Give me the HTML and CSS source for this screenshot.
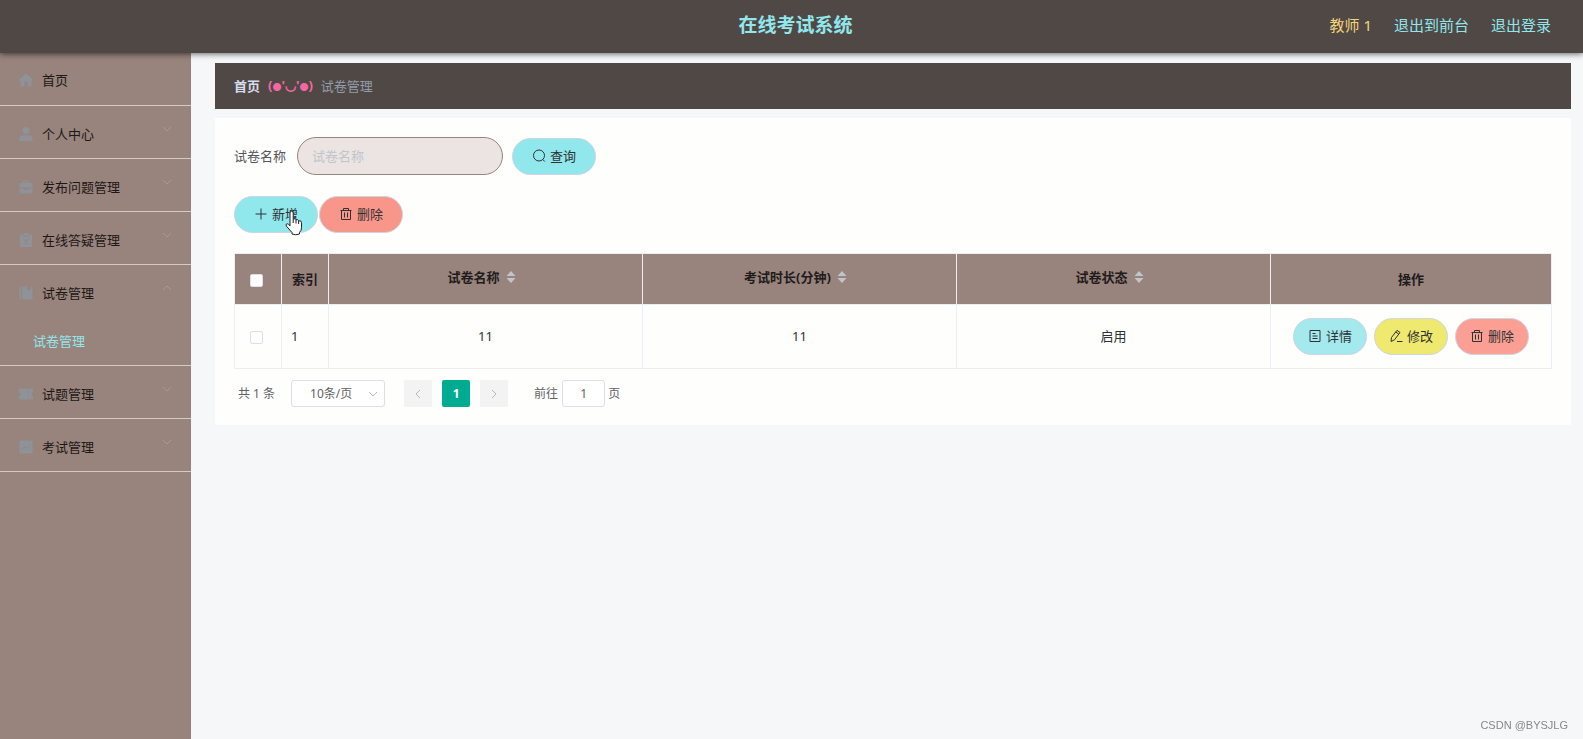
FILE: index.html
```html
<!DOCTYPE html>
<html lang="zh-CN">
<head>
<meta charset="utf-8">
<title>在线考试系统</title>
<link rel="stylesheet" href="styles.css">
</head>
<body>
<svg class="defs" aria-hidden="true">
  <symbol id="down" viewBox="0 0 10 10"><path d="M1 3l4 4 4-4" fill="none" stroke="currentColor"/></symbol>
  <symbol id="up" viewBox="0 0 10 10"><path d="M1 7l4-4 4 4" fill="none" stroke="currentColor"/></symbol>
  <symbol id="trash" viewBox="0 0 14 14"><path d="M1.500 3.500h11M2.500 3.500v9h9v-9M4.500 3.500v-2h5v2M5.500 5.500v5M8.500 5.500v5" fill="none" stroke="currentColor"/></symbol>
  <symbol id="sort" viewBox="0 0 10 12"><path d="M5 0l4.500 5h-9zM5 12L.5 7h9z" fill="currentColor"/></symbol>
</svg>
<header class="topbar">
  <h1 class="topbar-title">在线考试系统</h1>
  <nav class="topbar-links">
    <span class="user-name">教师 1</span>
    <a href="#">退出到前台</a>
    <a href="#">退出登录</a>
  </nav>
</header>
<div class="layout">
  <nav class="sidebar">
    <ul class="menu">
      <li class="menu-group"><a class="menu-item menu-home" href="#">
        <svg class="menu-icon" viewBox="0 0 14 14"><path d="M7 .5L.3 6.500V8h1.200v5.500h3.800V9.500q0-1.500 1.700-1.500t1.700 1.500v4h3.800V8h1.200V6.500z"/></svg>
        <span>首页</span></a></li>
      <li class="menu-group"><a class="menu-item" href="#">
        <svg class="menu-icon" viewBox="0 0 14 14"><circle cx="7" cy="3.500" r="3.500"/><path d="M.5 14v-2.500q0-3 3-3h7q3 0 3 3V14z"/></svg>
        <span>个人中心</span><svg class="menu-arrow"><use href="#down"/></svg></a></li>
      <li class="menu-group"><a class="menu-item" href="#">
        <svg class="menu-icon" viewBox="0 0 14 14"><path d="M4 3V.5h6V3h3.500v4.500H.5V3zm1.200 0h3.600V1.700H5.200zM.5 8.500h4.700V10h3.600V8.500h4.700v5H.5z"/></svg>
        <span>发布问题管理</span><svg class="menu-arrow"><use href="#down"/></svg></a></li>
      <li class="menu-group"><a class="menu-item" href="#">
        <svg class="menu-icon" viewBox="0 0 14 14"><path d="M1 1.500h3.500V0h5v1.500H13V14H1z"/><path class="menu-cut" d="M3.500 3h7M4.500 6l5 5M9.500 6l-5 5"/></svg>
        <span>在线答疑管理</span><svg class="menu-arrow"><use href="#down"/></svg></a></li>
      <li class="menu-group"><a class="menu-item" href="#">
        <svg class="menu-icon" viewBox="0 0 14 14"><path d="M.5.5h1.700v13H.5zM3.200.5h5v4.300l1.700-1.300 1.700 1.300V.5h1.900v13H3.200z"/></svg>
        <span>试卷管理</span><svg class="menu-arrow"><use href="#up"/></svg></a>
        <a class="submenu-item" href="#">试卷管理</a></li>
      <li class="menu-group"><a class="menu-item" href="#">
        <svg class="menu-icon" viewBox="0 0 14 14"><path d="M0 1.500h9v1h1v-1h4v3.200q-3 2.300 0 4.600v3.200h-4v-1H9v1H0V9.300q3-2.300 0-4.600zM9 4v2h1V4zm0 4v2h1V8z"/></svg>
        <span>试题管理</span><svg class="menu-arrow"><use href="#down"/></svg></a></li>
      <li class="menu-group"><a class="menu-item" href="#">
        <svg class="menu-icon" viewBox="0 0 14 14"><path d="M.5.5h13v13H.5z"/><path class="menu-cut" d="M2.500 10l3-3.500 2.500 2 3.500-4"/></svg>
        <span>考试管理</span><svg class="menu-arrow"><use href="#down"/></svg></a></li>
    </ul>
  </nav>
  <main class="content">
    <nav class="breadcrumb">
      <a class="crumb-home" href="#">首页</a>
      <span class="crumb-face">(<span class="crumb-cheek">●</span>'◡'<span class="crumb-cheek">●</span>)</span>
      <span class="crumb-current">试卷管理</span>
    </nav>
    <section class="card">
      <form class="search">
        <label for="paper-name">试卷名称</label>
        <input class="search-input" id="paper-name" type="text" placeholder="试卷名称">
        <button class="btn btn-cyan" type="button"><svg class="icon" viewBox="0 0 14 14"><circle cx="7" cy="6.500" r="5.500" fill="none" stroke="currentColor"/><path d="M10.800 10.500l2 2" stroke="currentColor"/></svg>查询</button>
      </form>
      <div class="actions">
        <button class="btn btn-cyan btn-add" type="button"><svg class="icon" viewBox="0 0 14 14"><path d="M7 1.500v11M1.500 7h11" stroke="currentColor"/></svg>新增
          <svg class="pointer" viewBox="0 0 18 26"><path d="M5 14V3q0-1.800 1.600-1.800T8.200 3v6q2.200-1 2.800.8 2-.9 2.600 1 2.900-.8 2.900 2v5q0 3-2 4.500V24q-4 1.500-7.500 0v-1.500L1.300 16q-.9-2.200 1-2.200 1.300 0 2.700 2.200zM8.200 9v4M11 10v3.500M13.600 11v3" fill="#fff" stroke="#222"/></svg>
        </button>
        <button class="btn btn-red" type="button"><svg class="icon"><use href="#trash"/></svg>删除</button>
      </div>
      <table class="papers">
        <colgroup><col class="col-small"><col class="col-small"><col><col><col><col class="col-ops"></colgroup>
        <thead>
          <tr>
            <th><input class="check" type="checkbox" aria-label="全选"></th>
            <th>索引</th>
            <th><span class="sortable">试卷名称<svg class="sort"><use href="#sort"/></svg></span></th>
            <th><span class="sortable">考试时长(分钟)<svg class="sort"><use href="#sort"/></svg></span></th>
            <th><span class="sortable">试卷状态<svg class="sort"><use href="#sort"/></svg></span></th>
            <th>操作</th>
          </tr>
        </thead>
        <tbody>
          <tr>
            <td><input class="check" type="checkbox" aria-label="选择第 1 行"></td>
            <td class="index">1</td>
            <td>11</td>
            <td>11</td>
            <td>启用</td>
            <td><div class="row-actions">
              <button class="btn btn-row btn-cyan" type="button"><svg class="icon" viewBox="0 0 14 14"><path d="M2 1.500h10v11H2zM4.500 4.500h3M4.500 7h5M4.500 9.500h5" fill="none" stroke="currentColor"/></svg>详情</button>
              <button class="btn btn-row btn-yellow" type="button"><svg class="icon" viewBox="0 0 14 14"><path d="M2 12.500l.5-4L8 1.300l3 2.200-5.500 7.300zM6.800 3l3 2.200M8 12.500h5.500" fill="none" stroke="currentColor"/></svg>修改</button>
              <button class="btn btn-row btn-red" type="button"><svg class="icon"><use href="#trash"/></svg>删除</button>
            </div></td>
          </tr>
        </tbody>
      </table>
      <div class="pagination">
        <span class="total">共 1 条</span>
        <span class="size-box"><select class="page-size" aria-label="每页条数"><option>10条/页</option></select><svg class="size-arrow"><use href="#down"/></svg></span>
        <div class="pages">
          <button class="page-btn" type="button" disabled aria-label="上一页"><svg class="page-arrow" viewBox="0 0 10 10"><path d="M7 1L3 5l4 4" fill="none" stroke="currentColor"/></svg></button>
          <button class="page-btn page-current" type="button">1</button>
          <button class="page-btn" type="button" disabled aria-label="下一页"><svg class="page-arrow" viewBox="0 0 10 10"><path d="M3 1l4 4-4 4" fill="none" stroke="currentColor"/></svg></button>
        </div>
        <label class="jump">前往<input class="jump-input" type="text" value="1">页</label>
      </div>
    </section>
  </main>
</div>
<div class="watermark">CSDN @BYSJLG</div>
</body>
</html>
```

FILE: styles.css
```css
* { box-sizing: border-box; }

body {
  margin: 0;
  min-height: 100vh;
  display: flex;
  flex-direction: column;
  background: #f5f7f9;
  color: #303133;
  font: 13px/20px "Noto Sans", "Noto Sans CJK SC", sans-serif;
}

button, input, select { font: inherit; color: inherit; margin: 0; }
a { color: inherit; text-decoration: none; }
.defs { display: none; }

.topbar {
  position: relative;
  z-index: 1;
  display: grid;
  grid-template-columns: 1fr auto 1fr;
  align-items: center;
  height: 53px;
  padding: 0 32px 4px 40px;
  background: #504845;
  box-shadow: 0 1px 6px rgba(0, 0, 0, .6);
}
.topbar-title {
  grid-column: 2;
  margin: 0;
  color: #90e7ec;
  font-size: 19px;
  line-height: 28px;
}
.topbar-links {
  display: flex;
  justify-content: flex-end;
  gap: 22px;
  color: #90e7ec;
  font-size: 15px;
}
.user-name { color: #f3d57b; }

.layout { flex: 1; display: flex; }

.sidebar {
  flex: none;
  width: 191px;
  background: #98837d;
}
.menu { margin: 0; padding: 0; list-style: none; }
.menu-group { border-bottom: 1px solid #d5cac6; }
.menu-item {
  display: flex;
  align-items: center;
  gap: 9px;
  height: 52px;
  padding: 3px 19px 0;
  color: #1d1816;
}
.menu-home { padding-top: 1px; }
.menu-icon { width: 14px; height: 14px; fill: #8e9399; }
.menu-cut { fill: none; stroke: #98837d; }
.menu-arrow {
  width: 10px;
  height: 10px;
  margin: 0 0 9px auto;
  color: #a39b9a;
}
.submenu-item {
  display: block;
  padding: 14px 33px;
  color: #90e7ec;
}

.content { flex: 1; min-width: 0; padding: 10px 12px 24px 24px; }
.breadcrumb {
  display: flex;
  align-items: center;
  gap: 8px;
  height: 46px;
  margin-bottom: 9px;
  padding: 0 19px;
  background: #504845;
}
.crumb-home { color: #d6dcf0; font-weight: 700; }
.crumb-face { color: #f268a4; font-weight: 700; }
.crumb-cheek { font-size: 9px; }
.crumb-current { color: #949cab; }

.card { padding: 19px 19px 18px; background: #fefefd; }
.search { display: flex; align-items: center; color: #55565a; }
.search-input {
  width: 206px;
  height: 38px;
  margin: 0 9px 0 11px;
  padding: 0 14px;
  border: 1px solid #98837d;
  border-radius: 19px;
  background: #ebe4e2;
}
.search-input::placeholder { color: #c0c4cc; opacity: 1; }

.btn {
  display: inline-flex;
  align-items: center;
  justify-content: center;
  gap: 4px;
  height: 37px;
  padding: 0 19px 1px;
  border: 1px solid #ced5e2;
  border-radius: 19px;
  color: #303133;
}
.btn-cyan { background: #90e7ec; }
.btn-red { background: #f9968a; }
.btn-yellow { background: #efe970; }
.icon { width: 14px; height: 14px; }
.actions { display: flex; gap: 1px; margin: 21px 0 20px; }
.btn-add { position: relative; }
.pointer {
  position: absolute;
  left: 50px;
  top: 13px;
  width: 18px;
  height: 26px;
}

.papers {
  width: 100%;
  table-layout: fixed;
  border-collapse: collapse;
  border: 1px solid #e6e9f3;
  text-align: center;
}
.col-small { width: 47px; }
.col-ops { width: 281px; }
.papers th, .papers td { padding: 0; border: 1px solid #ebeef5; }
.papers th { height: 51px; background: #98837d; color: #1f1c1b; font-weight: 700; }
.papers td { height: 64px; padding-bottom: 1px; }
.papers .index { padding-left: 9px; text-align: left; }
.sortable { display: inline-flex; align-items: center; gap: 6px; padding: 0 8px 4px 0; }
.sort { width: 10px; height: 12px; color: #c0c4cc; }
.check {
  appearance: none;
  display: inline-block;
  width: 13px;
  height: 13px;
  margin-right: 3px;
  border: 1px solid #dcdfe6;
  border-radius: 2px;
  background: #fff;
  vertical-align: middle;
}
.row-actions { display: flex; justify-content: center; gap: 7px; }
.btn-row { padding: 0 14px 1px; }
.btn-row.btn-cyan { background: #a4e9ee; }
.btn-row.btn-red { background: #fb9f94; }

.pagination {
  display: flex;
  align-items: center;
  padding: 11px 4px 0;
  color: #606266;
  font-size: 12px;
}
.size-box { position: relative; margin: 0 19px 0 16px; }
.page-size {
  display: block;
  appearance: none;
  width: 94px;
  height: 27px;
  padding: 0 18px;
  border: 1px solid #dcdfe6;
  border-radius: 3px;
  background: #fff;
}
.size-arrow {
  position: absolute;
  right: 7px;
  top: 9px;
  width: 10px;
  height: 10px;
  color: #b4b8c0;
}
.pages { display: flex; gap: 10px; margin-right: 26px; }
.page-btn {
  width: 28px;
  height: 27px;
  padding: 0;
  border: 0;
  border-radius: 2px;
  background: #f3f3f4;
  color: #b4b8c0;
}
.page-current { background: #00ac91; color: #fff; font-weight: 700; }
.page-arrow { width: 10px; height: 10px; vertical-align: middle; }
.jump { display: flex; align-items: center; }
.jump-input {
  width: 43px;
  height: 27px;
  margin: 0 3px 0 4px;
  padding: 0;
  border: 1px solid #dcdfe6;
  border-radius: 3px;
  background: #fff;
  text-align: center;
}

.watermark {
  position: fixed;
  right: 15px;
  bottom: 7px;
  color: #85878a;
  font: 11px/14px "Liberation Sans", sans-serif;
}
```
